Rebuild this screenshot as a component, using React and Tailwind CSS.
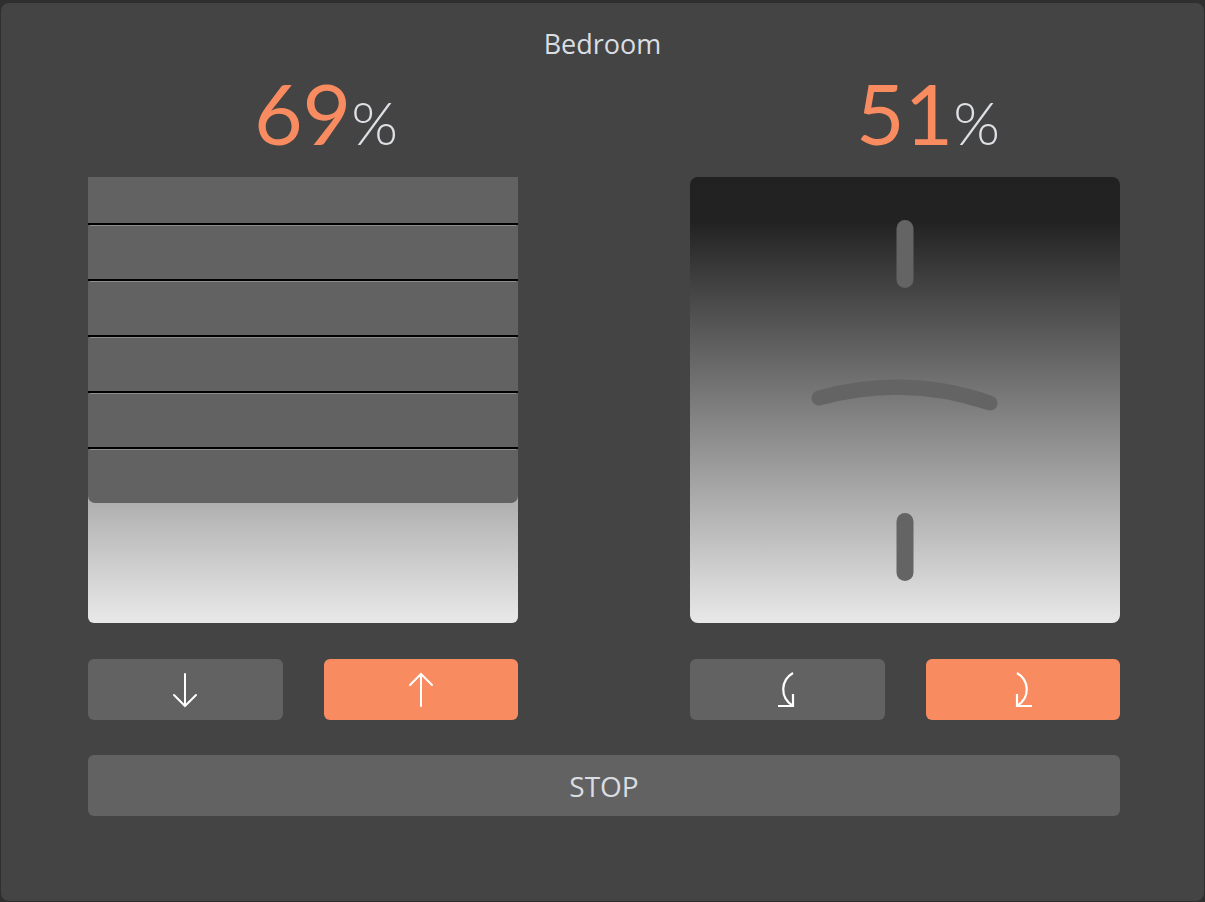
import React from "react";

const font = { fontFamily: "Lato, 'Noto Sans', sans-serif" };
const textFont = { fontFamily: "'Open Sans', 'Noto Sans', sans-serif" };

function Percent({ value }) {
  return (
    <div className="h-[107px] pl-[46px] flex items-start justify-center">
      <div className="flex items-baseline leading-none mt-[1px]">
        <span className="text-[84px] text-[#f98b60] font-normal">{value}</span>
        <span className="text-[60px] text-[#dde0e4] font-light">%</span>
      </div>
    </div>
  );
}

function Blind() {
  const slats = [0, 1, 2, 3, 4, 5];
  return (
    <div className="h-[446px] flex flex-col rounded-b-[6px] overflow-hidden bg-[linear-gradient(to_bottom,#b0b0b0_73%,#e9e9e9_100%)]">
      {slats.map((i) =>
        i === 0 ? (
          <div key={i} className="h-[46px] bg-[#626262]" />
        ) : (
          <div
            key={i}
            className={
              "h-[56px] flex flex-col bg-[#626262] border-t-2 border-black" +
              (i === 5 ? " rounded-b-[7px]" : "")
            }
          >
            <div className="h-px mx-[2px] bg-[#8e8e8e]" />
          </div>
        )
      )}
    </div>
  );
}

function Tilt() {
  return (
    <div className="h-[446px] rounded-[8px] overflow-hidden bg-[linear-gradient(to_bottom,#212121_0%,#222222_10%,#e9e9e9_100%)]">
      <svg width="430" height="446" viewBox="0 0 430 446">
        <g stroke="#646464" strokeLinecap="round" fill="none">
          <line x1="215" y1="51.5" x2="215" y2="102.5" strokeWidth="17" />
          <path d="M129 221 Q215 197 300 226" strokeWidth="15" />
          <line x1="215" y1="344.5" x2="215" y2="395.5" strokeWidth="17" />
        </g>
      </svg>
    </div>
  );
}

function Btn({ orange, children }) {
  return (
    <button
      className={
        "h-[61px] rounded-[6px] flex items-center justify-center " +
        (orange ? "bg-[#f98b60]" : "bg-[#626262]")
      }
    >
      {children}
    </button>
  );
}

const ArrowDown = () => (
  <svg width="26" height="36" viewBox="0 0 26 36" fill="none" stroke="#fff" strokeWidth="2" strokeLinecap="round">
    <path d="M13 2 V34 M2 23 L13 34 L24 23" />
  </svg>
);

const ArrowUp = () => (
  <svg width="26" height="36" viewBox="0 0 26 36" fill="none" stroke="#fff" strokeWidth="2" strokeLinecap="round">
    <path d="M13 34 V2 M2 13 L13 2 L24 13" />
  </svg>
);

const RotLeft = () => (
  <svg width="22" height="38" viewBox="0 0 22 38" fill="none" stroke="#fff" strokeWidth="2.2">
    <path d="M17 2 C5 9 3 26 17 35" />
    <path d="M2 35 H17 V23" />
  </svg>
);

const RotRight = () => (
  <svg width="22" height="38" viewBox="0 0 22 38" fill="none" stroke="#fff" strokeWidth="2.2">
    <path d="M5 2 C17 9 19 26 5 35" />
    <path d="M20 35 H5 V23" />
  </svg>
);

export default function App() {
  return (
    <div className="w-[1205px] h-[902px] bg-[#2f2f2f] pt-[3px]" style={font}>
      <div className="h-[898px] mx-[1px] rounded-[8px] bg-[#444444] pt-[23px]">
        <div className="text-center text-[27px] leading-[36px] text-[#dadde1]" style={textFont}>
          Bedroom
        </div>

        <div className="grid grid-cols-[430px_430px] gap-x-[172px] pl-[87px] mt-[8px]">
          <div>
            <Percent value="69" />
            <Blind />
            <div className="grid grid-cols-2 gap-x-[41px] mt-[36px]">
              <Btn>
                <ArrowDown />
              </Btn>
              <Btn orange>
                <ArrowUp />
              </Btn>
            </div>
          </div>
          <div>
            <Percent value="51" />
            <Tilt />
            <div className="grid grid-cols-2 gap-x-[41px] mt-[36px]">
              <Btn>
                <RotLeft />
              </Btn>
              <Btn orange>
                <RotRight />
              </Btn>
            </div>
          </div>
        </div>

        <div className="pl-[87px] mt-[35px]">
          <button
            className="w-[1032px] h-[61px] rounded-[6px] bg-[#626262] text-[28px] text-[#dadde1] flex items-center justify-center"
            style={textFont}
          >
            STOP
          </button>
        </div>
      </div>
    </div>
  );
}
